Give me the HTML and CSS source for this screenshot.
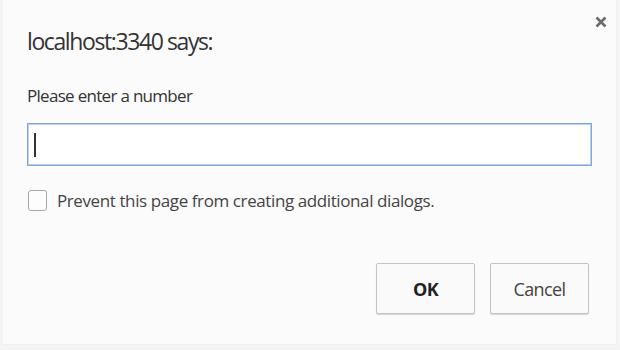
FILE: index.html
```html
<!DOCTYPE html>
<html lang="en">
  <head>
    <meta charset="UTF-8" />
    <meta name="viewport" content="width=device-width, initial-scale=1.0" />
    <link rel="stylesheet" href="styles.css">
    <title>Prompt</title>
  </head>
  <body>
    <div class="dialog">
      <button class="close" aria-label="Close">
        <svg width="12" height="12" viewBox="0 0 12 12">
          <path d="M1.5 1.5 L10.5 10.5 M10.5 1.5 L1.5 10.5" stroke="#6b6b6b" stroke-width="2.6" />
        </svg>
      </button>

      <div class="title">localhost:3340 says:</div>
      <div class="message">Please enter a number</div>

      <div class="field">
        <span class="caret"></span>
      </div>

      <label class="suppress">
        <span class="box"></span>
        Prevent this page from creating additional dialogs.
      </label>

      <div class="buttons">
        <button class="button ok">OK</button>
        <button class="button">Cancel</button>
      </div>
    </div>
  </body>
</html>
```

FILE: styles.css
```css
body {
  margin: 0;
  background-color: #f4f4f4;
  font-family: "Open Sans", "Noto Sans", sans-serif;
  color: #333;
}

.dialog {
  position: relative;
  box-sizing: border-box;
  width: 614px;
  height: 345px;
  margin: 0 0 0 3px;
  padding: 25px 24px 0 24px;
  background-color: #fbfbfb;
  border-right: 1px solid #f0f0f0;
  border-bottom: 1px solid #eeeeee;
}

/* close button sits over the corner */
.close {
  position: absolute;
  top: 16px;
  right: 8px;
  border: none;
  background: none;
  padding: 0;
  width: 14px;
  height: 14px;
}

.title {
  font-size: 23px;
  letter-spacing: -1.4px;
  line-height: 32px;
  color: #333;
}

.message {
  margin-top: 28px;
  font-size: 17px;
  letter-spacing: -0.7px;
  line-height: 22px;
  color: #333;
}

.field {
  box-sizing: border-box;
  margin: 16px 0 0 0;
  width: 565px;
  height: 43px;
  background: #fff;
  border: 1px solid #7ea6e6;
  box-shadow: inset 0 0 0 1px #b9d0f3;
  padding: 9px 0 0 6px;
}

.caret {
  display: block;
  width: 2px;
  height: 24px;
  background: #333;
}

.suppress {
  display: flex;
  align-items: center;
  gap: 10px;
  margin: 23px 0 0 1px;
  font-size: 17px;
  letter-spacing: -0.4px;
  color: #444;
}

.box {
  box-sizing: border-box;
  width: 19px;
  height: 21px;
  border: 1px solid #a8a8a8;
  border-radius: 3px;
  background: #fdfdfd;
}

.buttons {
  display: flex;
  justify-content: flex-end;
  gap: 15px;
  margin: 51px 0 0 0;
  padding-right: 3px;
}

.button {
  box-sizing: border-box;
  width: 99px;
  height: 51px;
  border: 1px solid #c3c3c3;
  border-radius: 2px;
  background: #fafafa;
  box-shadow: 0 1px 1px rgba(0, 0, 0, 0.15);
  font-family: "Open Sans", "Noto Sans", sans-serif;
  font-size: 18px;
  letter-spacing: -0.6px;
  color: #444;
}

.ok {
  font-weight: bold;
  color: #222;
}
```
